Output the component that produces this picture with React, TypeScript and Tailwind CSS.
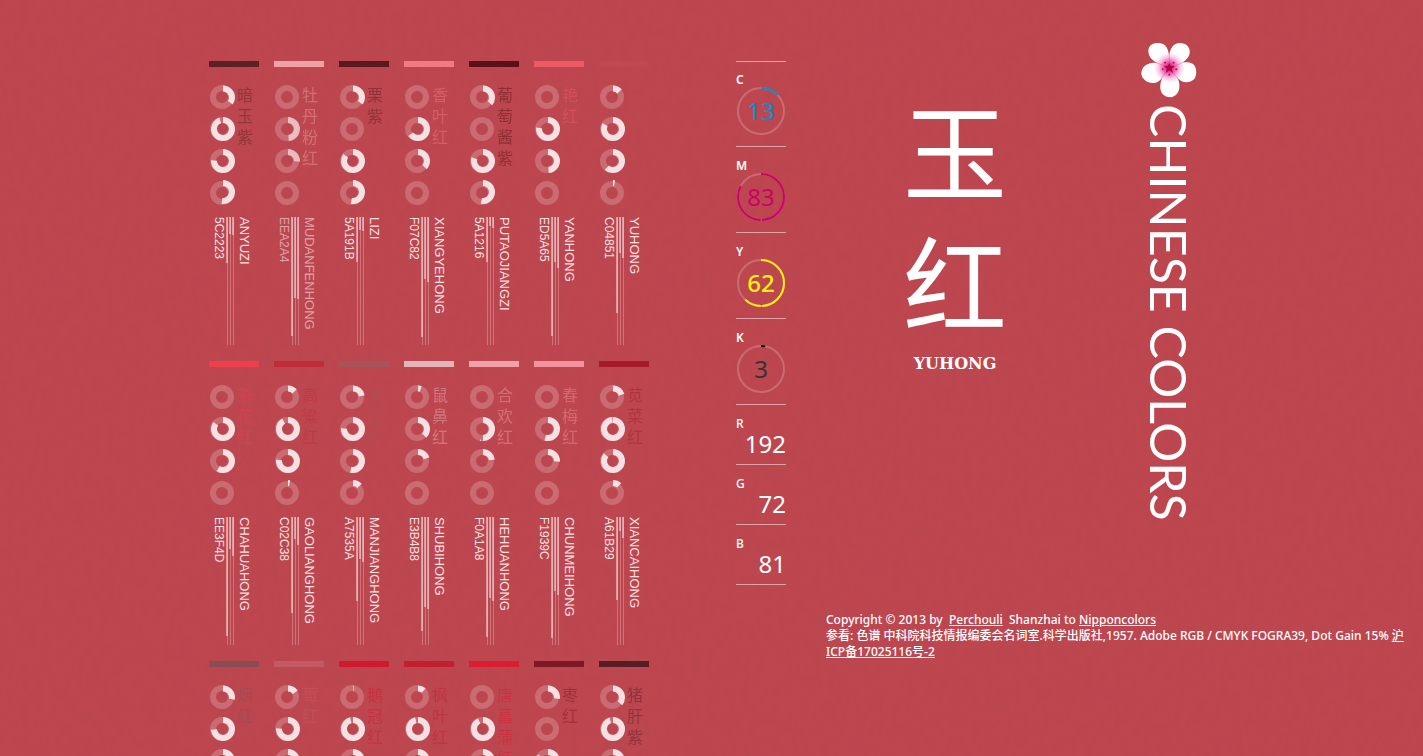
import React from "react";

type Swatch = {
  name: string;
  pinyin: string;
  hex: string;
  cmyk: [number, number, number, number];
  faded?: boolean;
};

const swatches: Swatch[] = [
  { name: "暗玉紫", pinyin: "ANYUZI", hex: "5C2223", cmyk: [35, 95, 76, 52] },
  { name: "牡丹粉红", pinyin: "MUDANFENHONG", hex: "EEA2A4", cmyk: [0, 49, 26, 0], faded: true },
  { name: "栗紫", pinyin: "LIZI", hex: "5A191B", cmyk: [35, 100, 85, 53] },
  { name: "香叶红", pinyin: "XIANGYEHONG", hex: "F07C82", cmyk: [0, 65, 37, 0] },
  { name: "葡萄酱紫", pinyin: "PUTAOJIANGZI", hex: "5A1216", cmyk: [36, 100, 80, 53] },
  { name: "艳红", pinyin: "YANHONG", hex: "ED5A65", cmyk: [0, 77, 49, 0] },
  { name: "玉红", pinyin: "YUHONG", hex: "C04851", cmyk: [13, 83, 62, 3] },
  { name: "茶花红", pinyin: "CHAHUAHONG", hex: "EE3F4D", cmyk: [0, 85, 59, 0] },
  { name: "高粱红", pinyin: "GAOLIANGHONG", hex: "C02C38", cmyk: [13, 92, 77, 3] },
  { name: "满江红", pinyin: "MANJIANGHONG", hex: "A7535A", cmyk: [22, 76, 54, 13] },
  { name: "鼠鼻红", pinyin: "SHUBIHONG", hex: "E3B4B8", cmyk: [5, 38, 20, 0] },
  { name: "合欢红", pinyin: "HEHUANHONG", hex: "F0A1A8", cmyk: [0, 50, 23, 0] },
  { name: "春梅红", pinyin: "CHUNMEIHONG", hex: "F1939C", cmyk: [0, 55, 26, 0] },
  { name: "苋菜红", pinyin: "XIANCAIHONG", hex: "A61B29", cmyk: [20, 99, 86, 12] },
  { name: "烟红", pinyin: "YANHONG", hex: "894E54", cmyk: [28, 74, 56, 25] },
  { name: "莓红", pinyin: "MEIHONG", hex: "C45A65", cmyk: [15, 76, 49, 3] },
  { name: "鹅冠红", pinyin: "EGUANHONG", hex: "D11A2D", cmyk: [1, 96, 81, 1] },
  { name: "枫叶红", pinyin: "FENGYEHONG", hex: "C21F30", cmyk: [11, 96, 80, 3] },
  { name: "唐菖蒲红", pinyin: "TANGCHANGPUHONG", hex: "DE1C31", cmyk: [0, 93, 80, 0] },
  { name: "枣红", pinyin: "ZAOHONG", hex: "7C1823", cmyk: [27, 100, 84, 37] },
  { name: "猪肝紫", pinyin: "ZHUGANZI", hex: "541E24", cmyk: [36, 95, 72, 56] },
];

const inks = [
  { label: "C", value: 13, text: "text-[#0093d3] font-normal", stroke: "#0093d3" },
  { label: "M", value: 83, text: "text-[#cc006b] font-normal", stroke: "#cc006b" },
  { label: "Y", value: 62, text: "text-[#fff10c] font-medium", stroke: "#fff10c" },
  { label: "K", value: 3, text: "text-[#333333] font-normal", stroke: "#000000" },
];

const lights = [
  { label: "R", value: 192 },
  { label: "G", value: 72 },
  { label: "B", value: 81 },
];

function Rings({ cmyk, faded }: Pick<Swatch, "cmyk" | "faded">) {
  const arcY = [13.5, 45, 77, 108];
  return (
    <svg width="27" height="122" viewBox="0 0 27 122" fill="none" strokeWidth="6" aria-hidden="true">
      {cmyk.map((value, i) => (
        <g key={i}>
          <circle cx="13" cy={13 + i * 32} r="9" stroke="#fff" strokeOpacity="0.2" />
          {value > 0 && value < 100 && (
            <circle
              cx="14"
              cy={arcY[i]}
              r="9"
              stroke="#f5e1e3"
              strokeOpacity={faded ? 0.7 : 1}
              pathLength={100}
              strokeDasharray={`${value} 200`}
              transform={`rotate(-90 14 ${arcY[i]})`}
            />
          )}
        </g>
      ))}
    </svg>
  );
}

function Levels({ hex }: { hex: string }) {
  const rgb = [0, 2, 4].map((at) => parseInt(hex.slice(at, at + 2), 16));
  return (
    <svg className="ml-px" width="9" height="128" viewBox="0 0 9 128" fill="#fff" aria-hidden="true">
      {rgb.map((value, i) => (
        <g key={i}>
          <rect x={i * 3 + 1} y="0" width="1" height="128" fillOpacity="0.25" />
          <rect x={i * 3} y="0" width="2" height={Math.round(value / 2)} fillOpacity="0.45" />
        </g>
      ))}
    </svg>
  );
}

function SwatchCard({ swatch }: { swatch: Swatch }) {
  const { name, pinyin, hex, cmyk, faded } = swatch;
  const tone = faded ? "text-[#f5e1e3]/60" : "text-[#f5e1e3]";
  return (
    <li>
      <a href={`#${pinyin.toLowerCase()}`} className="block h-[285px]">
        <div className="h-1.5" style={{ backgroundColor: `#${hex}` }} />
        <div className="mt-[17px] flex h-[133px]">
          <Rings cmyk={cmyk} faded={faded} />
          <span
            className="ml-px font-['Noto_Sans_CJK_SC',sans-serif] text-[16px] whitespace-nowrap opacity-45"
            style={{ color: `#${hex}` }}
          >
            {[...name].map((char, i) => (
              <span key={i} className="block h-[21px] leading-[20px]">
                {char}
              </span>
            ))}
          </span>
        </div>
        <div
          className={`flex items-start pl-[3px] font-['Liberation_Sans',sans-serif] whitespace-nowrap ${tone}`}
        >
          <span className="text-[12px] leading-[13px] [writing-mode:vertical-rl]">{hex}</span>
          <Levels hex={hex} />
          <span className="ml-px text-[13px] leading-[16px] [writing-mode:vertical-rl]">{pinyin}</span>
        </div>
      </a>
    </li>
  );
}

function InkBlock({ ink }: { ink: (typeof inks)[number] }) {
  const { label, value, text, stroke } = ink;
  const dash = value > 50 ? `49.5 0.7 ${value - 50.2} 200` : `${value} 200`;
  return (
    <div className="h-[86px] border-b border-white/50 pt-[11px] first:border-t first:pt-[10px]">
      <dt className="text-[12px] leading-[16px] font-semibold text-white">{label}</dt>
      <dd className="grid h-[46px] w-[50px] place-items-center content-center">
        <svg className="col-start-1 row-start-1" width="50" height="50" viewBox="0 0 50 50" fill="none" strokeWidth="2" aria-hidden="true">
          <circle cx="25" cy="25" r="23" stroke="#fff" strokeOpacity="0.2" />
          <circle
            cx="25"
            cy="25"
            r="23"
            stroke={stroke}
            pathLength={100}
            strokeDasharray={dash}
            transform="rotate(-90 25 25)"
          />
        </svg>
        <span className={`col-start-1 row-start-1 text-[24px] leading-[24px] ${text}`}>{value}</span>
      </dd>
    </div>
  );
}

function Blossom() {
  return (
    <svg width="56" height="56" viewBox="62 36 168 168" aria-hidden="true">
      <defs>
        <radialGradient id="blush" gradientUnits="userSpaceOnUse" cx="147" cy="113" r="46">
          <stop offset="0" stopColor="#d4006e" />
          <stop offset="0.35" stopColor="#e658a6" />
          <stop offset="0.7" stopColor="#f8c9e2" />
          <stop offset="1" stopColor="#ffffff" />
        </radialGradient>
      </defs>
      <g fill="url(#blush)">
        <path d="M146 112C118 104 86 92 84 66C83 44 102 37 120 40C144 44 149 70 146 112Z" />
        <path d="M147 112C142 78 149 44 172 40C192 36 211 49 208 69C206 91 176 106 147 112Z" />
        <path d="M147 112C172 96 205 92 218 102C231 112 230 137 221 148C209 160 187 160 176 148C163 139 153 125 147 112Z" />
        <path d="M147 113C168 131 179 150 177 173C175 191 163 199 152 202C134 202 122 193 120 175C118 153 129 131 147 113Z" />
        <path d="M146 112C138 134 124 152 106 158C86 163 64 150 63 130C64 110 78 101 96 99C114 97 133 102 146 112Z" />
      </g>
      <g stroke="#e23c97" strokeWidth="1.5" opacity="0.8">
        <path d="M147 113L147 76M147 113L185 99M147 113L174 148M147 113L121 148M147 113L107 98" />
      </g>
      <path
        d="M147 98L151 108L163 108L154 116L158 129L147 121L136 129L140 116L131 108L143 108Z"
        fill="#b3003c"
      />
      <g fill="#d10073">
        <circle cx="134" cy="98" r="3" />
        <circle cx="160" cy="98" r="3" />
        <circle cx="168" cy="118" r="3" />
        <circle cx="147" cy="134" r="3" />
        <circle cx="127" cy="118" r="3" />
      </g>
    </svg>
  );
}

function PaperGrain() {
  return (
    <svg className="pointer-events-none absolute inset-0 size-full" aria-hidden="true">
      <filter id="grain" x="0" y="0" width="100%" height="100%">
        <feTurbulence type="fractalNoise" baseFrequency="0.14 0.08" numOctaves="3" seed="4" />
        <feColorMatrix values="0 0 0 0 0.35  0 0 0 0 0.05  0 0 0 0 0.08  0.7 0 0 0 -0.25" />
      </filter>
      <rect width="100%" height="100%" filter="url(#grain)" opacity="0.4" />
    </svg>
  );
}

export default function App() {
  return (
    <div className="relative h-screen overflow-hidden bg-[#be474f] font-['Noto_Sans','Noto_Sans_CJK_SC',sans-serif] text-white">
      <PaperGrain />
      <main className="relative flex items-start pr-1 pl-[209px]">
        <nav aria-label="Colors" className="shrink-0 pt-[61px]">
          <ul className="grid grid-cols-[repeat(7,50px)] gap-[15px]">
            {swatches.map((swatch) => (
              <SwatchCard key={swatch.name} swatch={swatch} />
            ))}
          </ul>
        </nav>

        <dl className="ml-[87px] w-[50px] shrink-0 pt-[61px]">
          {inks.map((ink) => (
            <InkBlock key={ink.label} ink={ink} />
          ))}
          {lights.map(({ label, value }) => (
            <div key={label} className="h-[60px] border-b border-white/50 pt-[11px]">
              <dt className="text-[12px] leading-[16px] font-medium">{label}</dt>
              <dd className="text-right text-[24px] leading-[24px]">{value}</dd>
            </div>
          ))}
        </dl>

        <section className="ml-10 min-w-0 flex-1">
          <div className="flex h-[612px]">
            <header className="w-[258px] pt-[82px] text-center">
              <h2 className="font-['Noto_Sans_CJK_SC',sans-serif] text-[104px] leading-[132px] font-normal">
                <span className="block">玉</span>
                <span className="block">红</span>
              </h2>
              <p className="mt-2 font-['DejaVu_Serif',serif] text-[16px] leading-[20px] font-bold">YUHONG</p>
            </header>
            <div className="ml-[57px] flex w-14 flex-col items-center pt-[42px]">
              <Blossom />
              <h1 className="mt-1.5 font-['Lato',sans-serif] text-[50px] leading-[56px] whitespace-nowrap [writing-mode:vertical-rl]">
                CHINESE COLORS
              </h1>
            </div>
          </div>
          <footer className="text-[12px] leading-[16px] font-medium">
            <p>
              Copyright © 2013 by&nbsp; <a href="#perchouli" className="underline">Perchouli</a>&nbsp; Shanzhai to{" "}
              <a href="#nipponcolors" className="underline">Nipponcolors</a>
            </p>
            <p>
              参看: 色谱 中科院科技情报编委会名词室.科学出版社,1957. Adobe RGB / CMYK FOGRA39, Dot Gain 15%{" "}
              <a href="#icp" className="underline">沪ICP备17025116号-2</a>
            </p>
          </footer>
        </section>
      </main>
    </div>
  );
}
